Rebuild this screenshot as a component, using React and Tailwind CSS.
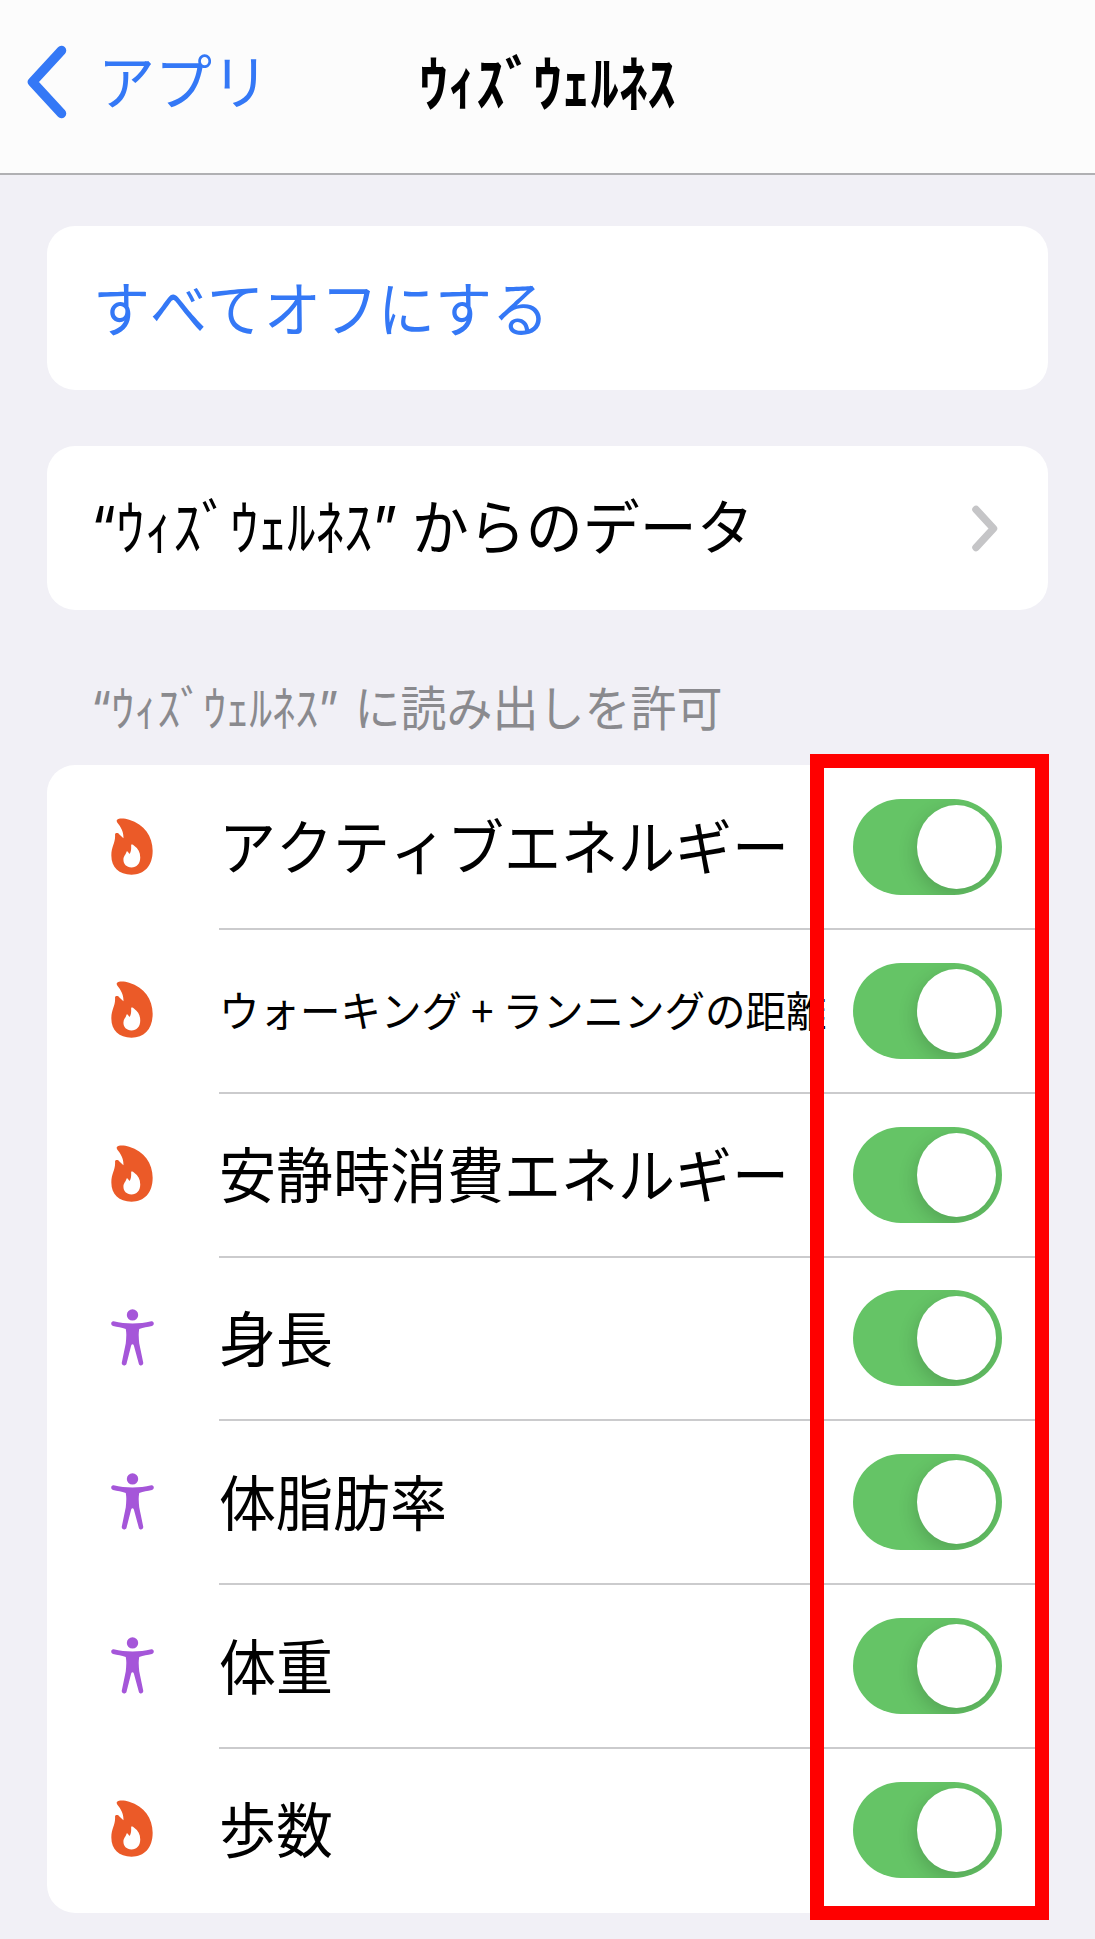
import clsx from "clsx";

const items = [
  { name: "アクティブエネルギー", icon: "flame" },
  { name: "ウォーキング+ランニングの距離", icon: "flame", small: true },
  { name: "安静時消費エネルギー", icon: "flame" },
  { name: "身長", icon: "body" },
  { name: "体脂肪率", icon: "body" },
  { name: "体重", icon: "body" },
  { name: "歩数", icon: "flame" },
];

const FlameIcon = () => (
  <svg viewBox="66 77 125 172" preserveAspectRatio="none" className="w-[42px] h-[57px]">
    <path
      fill="#eb5a28"
      fillRule="evenodd"
      d="M84 82C90 76 108 78 120 82C165 96 190 132 190 176C190 222 165 248 127 248C90 248 67 225 67 190C67 162 80 152 78 127C79 121 87 121 91 127L103 138C104 118 95 103 85 91C83 88 82 84 84 82ZM126 158C128 156 132 158 135 161C147 170 153 181 153 196C153 215 142 226 127 226C112 226 103 216 103 203C103 191 111 187 112 179C113 176 115 177 116 179L121 186C127 178 126 168 126 158Z"
    />
  </svg>
);

const BodyIcon = () => (
  <svg viewBox="64 60 128 172" preserveAspectRatio="none" className="w-[43px] h-[57px]">
    <g fill="#a556d9">
      <circle cx="128" cy="78" r="17" />
      <path d="M72 97C108 106 148 106 184 97C193 96 194 109 186 111C172 114 161 115 148 120C145 137 147 151 148 163L160 222C161 232 149 233 147 226L132 170C130 165 126 165 124 170L110 226C107 233 95 232 96 222L108 163C109 151 111 137 108 120C95 115 84 114 70 111C62 109 63 96 72 97Z" />
    </g>
  </svg>
);

const Toggle = () => (
  <div className="flex h-24 w-[149px] shrink-0 items-center justify-end overflow-hidden rounded-full bg-[#65c466] pr-1.5">
    <div className="h-[84px] w-[79px] rounded-[50%] bg-white shadow-[-2px_6px_18px_rgba(0,0,0,0.16)]"></div>
  </div>
);

const Quoted = () => (
  <>
    <span className="font-['Inter']">“</span>
    ｳｨｽﾞｳｪﾙﾈｽ
    <span className="font-['Inter']">”</span>
  </>
);

const Row = ({ item, first }) => {
  const parts = item.name.split("+");
  return (
    <div className={clsx("flex shrink-0", first ? "h-[163px]" : "h-[163.8px]")}>
      <div className="flex w-[172px] items-center justify-center pr-0.5">
        {item.icon == "flame" ? <FlameIcon /> : <BodyIcon />}
      </div>
      <div
        className={clsx(
          "flex flex-1 items-center justify-between border-[#cbcbcd] pr-[46px]",
          !first && "border-t-2"
        )}
      >
        <div
          className={clsx(
            "w-0 origin-left scale-y-105 whitespace-nowrap pb-1",
            item.small ? "text-[40.5px]" : "text-[57px]"
          )}
        >
          {parts[0]}
          {parts[1] && (
            <>
              <span className="inline-block w-[1em] text-center">+</span>
              {parts[1]}
            </>
          )}
        </div>
        <Toggle />
      </div>
    </div>
  );
};

export default function App() {
  return (
    <div className="relative h-[1939px] w-[1095px] overflow-hidden bg-[#f1f0f6] font-['Noto_Sans_CJK_JP',sans-serif] leading-none text-black [font-kerning:none]">
      <header className="grid h-[175px] grid-cols-[1fr_auto_1fr] items-center border-b-2 border-[#b0b0b3] bg-[#fcfcfc] pb-[9px]">
        <div className="flex items-center pl-[27px] text-[#3478f6]">
          <svg viewBox="0 0 40 74" className="h-[74px] w-10">
            <path
              d="M34.5 5.5L5.5 37L34.5 68.5"
              fill="none"
              stroke="currentColor"
              strokeWidth="9.5"
              strokeLinecap="round"
              strokeLinejoin="round"
            />
          </svg>
          <span className="ml-[31px] scale-y-105 pb-1.5 text-[57px]">アプリ</span>
        </div>
        <h1 className="scale-y-105 pb-1 text-[57px] font-bold">ｳｨｽﾞｳｪﾙﾈｽ</h1>
      </header>

      <main className="px-[47px] pt-[51px]">
        <div className="flex h-[164px] items-center rounded-[28px] bg-white px-[46px]">
          <span className="scale-y-105 pb-1 text-[57px] text-[#3478f6]">すべてオフにする</span>
        </div>

        <div className="mt-14 flex h-[164px] items-center justify-between rounded-[28px] bg-white pl-11 pr-[50px]">
          <div className="flex origin-left scale-y-105 whitespace-nowrap pb-1 text-[57px]">
            <span>
              <Quoted />
            </span>
            <span className="ml-3.5">からのデータ</span>
          </div>
          <svg viewBox="0 0 26 47" className="h-[47px] w-[26px]">
            <path
              d="M4 4.500L21.500 23.500L4 42.500"
              fill="none"
              stroke="#c5c5c7"
              strokeWidth="7.500"
              strokeLinecap="round"
              strokeLinejoin="round"
            />
          </svg>
        </div>

        <div className="flex h-[155px] items-end pb-[34px] pl-11">
          <div className="flex origin-left scale-y-105 whitespace-nowrap text-[46px] text-[#8a8a8e]">
            <span>
              <Quoted />
            </span>
            <span className="ml-4">に読み出しを許可</span>
          </div>
        </div>

        <div className="flex h-[1148px] flex-col overflow-hidden rounded-[28px] bg-white">
          {items.map((item, i) => (
            <Row key={item.name} item={item} first={i == 0} />
          ))}
        </div>
      </main>

      {/* highlight over the toggles */}
      <div className="absolute left-[810px] top-[754px] h-[1166px] w-[239px] border-[14px] border-[#ff0000]"></div>
    </div>
  );
}
